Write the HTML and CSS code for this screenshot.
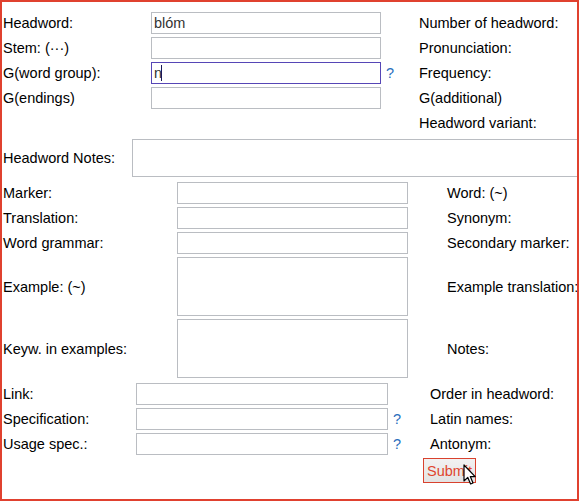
FILE: index.html
```html
<!DOCTYPE html>
<html>
<head>
<meta charset="utf-8">
<link rel="stylesheet" href="styles.css">
</head>
<body>
<div class="frame">
  <div class="sec s1">
    <label class="lbl">Headword:</label>
    <input class="fld" type="text" value="blóm">
    <span></span>
    <label class="lbl">Number of headword:</label>

    <label class="lbl">Stem: (···)</label>
    <input class="fld" type="text">
    <span></span>
    <label class="lbl">Pronunciation:</label>

    <label class="lbl">G(word group):</label>
    <div class="caretwrap"><input class="fld focus" type="text" value="n"><span class="caret"></span></div>
    <span class="help">?</span>
    <label class="lbl">Frequency:</label>

    <label class="lbl">G(endings)</label>
    <input class="fld" type="text">
    <span></span>
    <label class="lbl">G(additional)</label>

    <span></span>
    <span></span>
    <span></span>
    <label class="lbl">Headword variant:</label>
  </div>

  <div class="sec notes">
    <label class="lbl">Headword Notes:</label>
    <textarea class="area wide"></textarea>
  </div>

  <div class="sec s2">
    <label class="lbl">Marker:</label>
    <input class="fld" type="text">
    <span></span>
    <label class="lbl">Word: (~)</label>

    <label class="lbl">Translation:</label>
    <input class="fld" type="text">
    <span></span>
    <label class="lbl">Synonym:</label>

    <label class="lbl">Word grammar:</label>
    <input class="fld" type="text">
    <span></span>
    <label class="lbl">Secondary marker:</label>

    <label class="lbl">Example: (~)</label>
    <textarea class="area tall"></textarea>
    <span></span>
    <label class="lbl">Example translation:</label>

    <label class="lbl">Keyw. in examples:</label>
    <textarea class="area tall"></textarea>
    <span></span>
    <label class="lbl">Notes:</label>
  </div>

  <div class="sec s3">
    <label class="lbl">Link:</label>
    <input class="fld" type="text">
    <span></span>
    <label class="lbl pad">Order in headword:</label>

    <label class="lbl">Specification:</label>
    <input class="fld" type="text">
    <span class="help">?</span>
    <label class="lbl pad">Latin names:</label>

    <label class="lbl">Usage spec.:</label>
    <input class="fld" type="text">
    <span class="help">?</span>
    <label class="lbl pad">Antonym:</label>

    <span></span>
    <span></span>
    <span></span>
    <div class="btnwrap">
      <button class="submit" type="button">Submit</button>
      <svg class="cursor" width="14" height="22" viewBox="0 0 14 22"><path d="M1 1 L1 17 L4.8 13.4 L7.6 20 L10 19 L7.3 12.6 L12.2 12.6 Z" fill="#fff" stroke="#000" stroke-width="1.2" stroke-linejoin="round"/></svg>
    </div>
  </div>
</div>
</body>
</html>
```

FILE: styles.css
```css
html, body {
  margin: 0;
  padding: 0;
  background: #fff;
}
.frame {
  width: 575px;
  height: 487px;
  border: 2px solid #e0412f;
  overflow: hidden;
  display: flex;
  flex-direction: column;
  gap: 5px;
  padding-top: 10px;
  box-sizing: content-box;
  font-family: "Liberation Sans", Arial, sans-serif;
  font-size: 14.5px;
  color: #000;
}
.sec {
  display: grid;
  padding-left: 1px;
  row-gap: 3px;
  align-items: center;
  grid-auto-rows: minmax(22px, auto);
}
.s1 { grid-template-columns: 148px 230px 38px 300px; }
.notes { grid-template-columns: 129px 480px; }
.s2 { grid-template-columns: 174px 231px 39px 300px; }
.s3 { grid-template-columns: 133px 252px 35px 300px; }
.lbl {
  white-space: nowrap;
  line-height: 18px;
}
.pad { padding-left: 7px; }
.fld {
  box-sizing: border-box;
  width: 100%;
  height: 22px;
  margin: 0;
  border: 1px solid #babdc2;
  padding: 0 2px;
  font-family: "Liberation Sans", Arial, sans-serif;
  font-size: 14.5px;
  color: #333;
  background: #fff;
  outline: none;
}
.fld.focus { border-color: #5646b6; }
.caretwrap { position: relative; height: 22px; }
.caret {
  position: absolute;
  left: 10px;
  top: 3px;
  width: 1px;
  height: 16px;
  background: #1a1a5a;
}
.area {
  box-sizing: border-box;
  margin: 0;
  border: 1px solid #babdc2;
  background: #fff;
  resize: none;
  outline: none;
  display: block;
}
.wide { width: 480px; height: 38px; }
.tall { width: 100%; height: 59px; }
.help {
  color: #2b6fbd;
  padding-left: 5px;
}
.btnwrap {
  position: relative;
  height: 25px;
}
.submit {
  box-sizing: border-box;
  height: 25px;
  width: 53px;
  margin: 0;
  padding: 0 3px;
  border: 1px solid #d9422e;
  background: linear-gradient(#f2f2f2, #e3e3e3);
  color: #e0452e;
  font-family: "Liberation Sans", Arial, sans-serif;
  font-size: 14.5px;
  text-align: left;
}
.cursor {
  position: absolute;
  left: 40px;
  top: 6px;
}
```
